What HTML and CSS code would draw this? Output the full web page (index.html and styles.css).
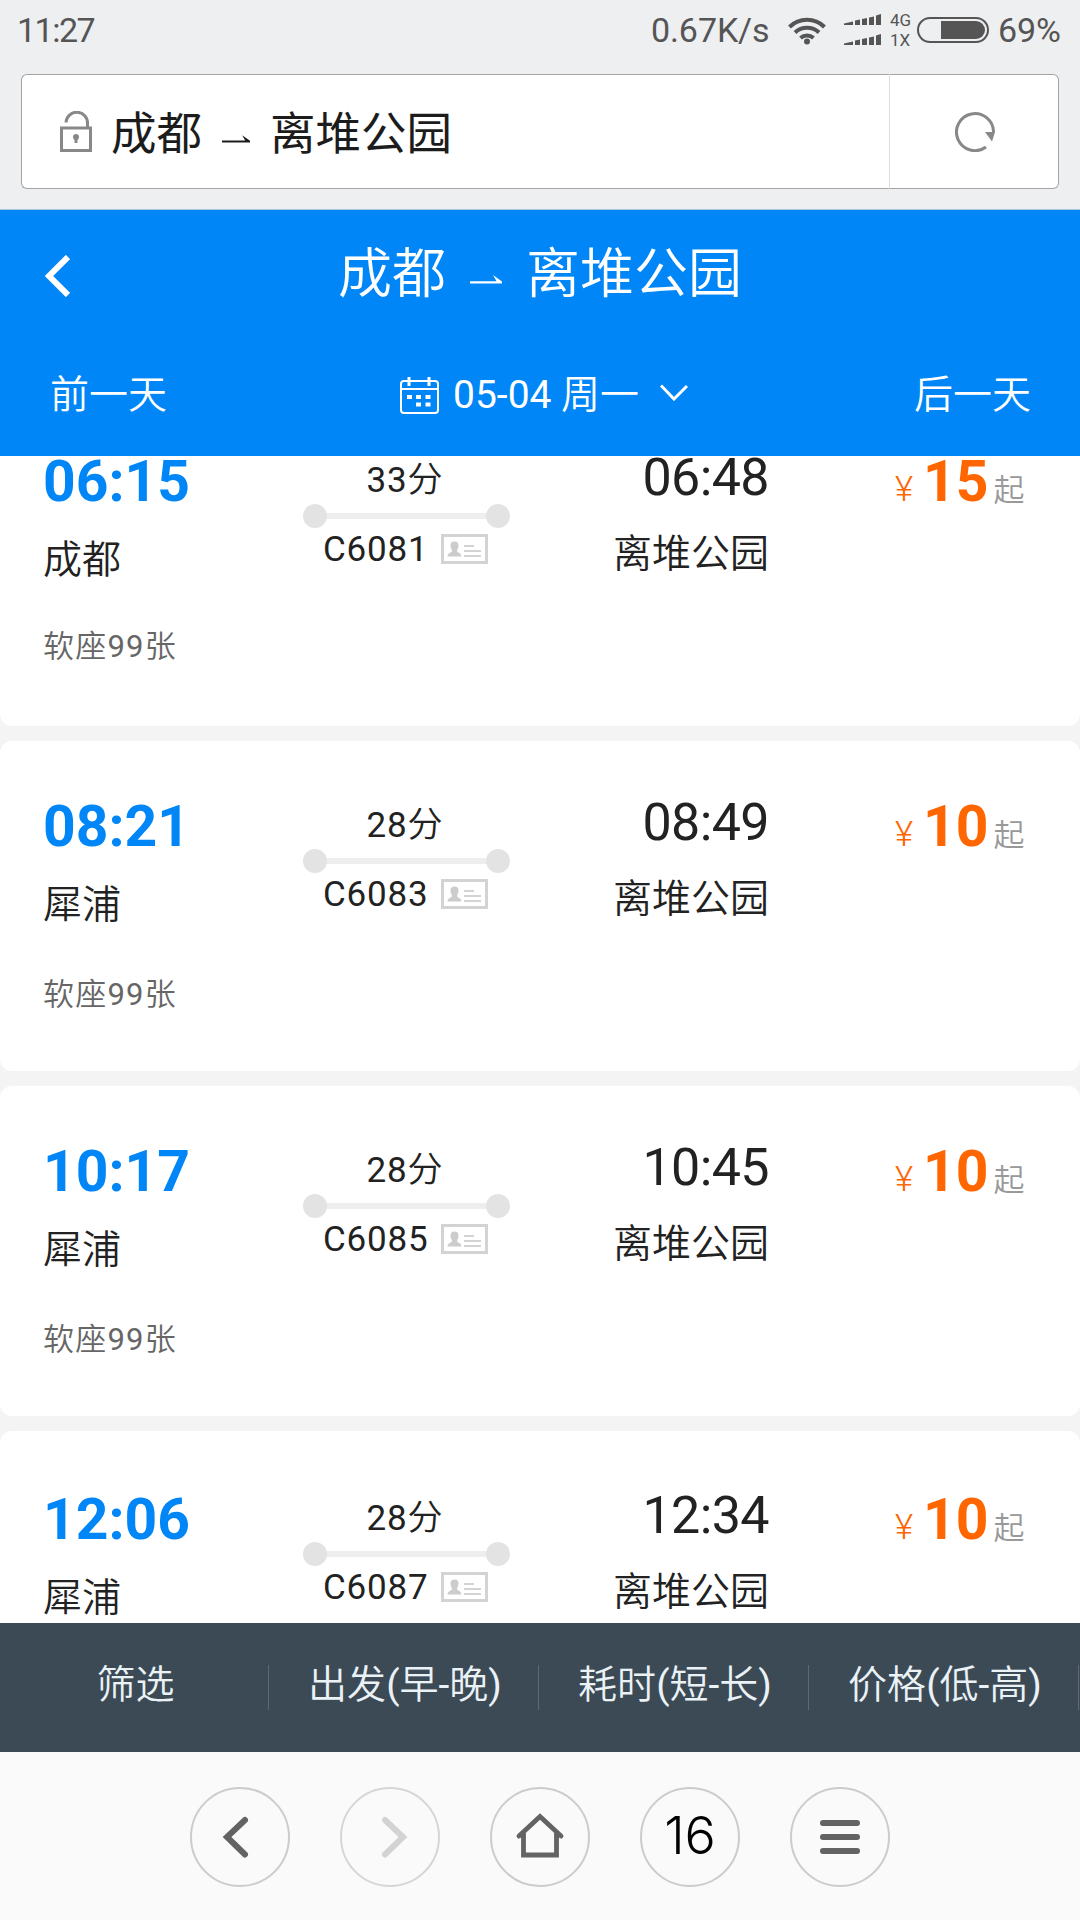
FILE: index.html
```
<!DOCTYPE html>
<html lang="zh-CN">

<head>
    <meta charset="UTF-8">
    <meta name="viewport" content="width=device-width, initial-scale=1.0">
    <title>成都 ⇀ 离堆公园</title>
    <link rel="stylesheet" href="styles.css">
</head>

<body>
    <!-- 状态栏 -->
    <div class="status-bar">
        <span class="clock">11:27</span>
        <span class="speed">0.67K/s</span>
        <svg class="wifi" viewBox="0 0 38 29">
            <path d="M1.500 11a25 25 0 0 1 35 0M7 16.500a17.500 17.500 0 0 1 24 0M12.500 22a9.500 9.500 0 0 1 13 0" />
            <circle cx="19" cy="25.500" r="3" />
        </svg>
        <svg class="signal" viewBox="0 0 38 32">
            <path d="M0 9.500L9 7.500V11H0zM11 6.500l5-1V11h-5zM18 5l5-1v7h-5zM25 3.500l5-1V11h-5zM32 1.500L37 0v11h-5z" />
            <path d="M0 29.500L9 27.500V31H0zM11 26.500l5-1V31h-5zM18 25l5-1v7h-5zM25 23.500l5-1V31h-5zM32 21.500L37 20v11h-5z" />
        </svg>
        <div class="net">
            <span>4G</span>
            <span>1X</span>
        </div>
        <div class="battery"><i></i></div>
        <span class="percent">69%</span>
    </div>

    <!-- 地址栏 -->
    <div class="address-bar">
        <div class="address">
            <svg class="lock" viewBox="0 0 32 41">
                <path d="M1.500 17h29v22.500h-29zM6 11.500a10.700 10.700 0 0 1 21.500 1V17" />
                <circle cx="16" cy="26" r="3" />
                <path d="M16 26v6" />
            </svg>
            <span>成都</span>
            <svg class="arrow" viewBox="0 0 32 10">
                <path d="M0 8.500H32V6.500L23 0 26.500 6.200H0z" />
            </svg>
            <span>离堆公园</span>
        </div>
        <div class="reload">
            <svg viewBox="0 0 40 41">
                <path d="M31 36A18.500 18.500 0 1 1 38.500 21.500" />
                <path class="tip" d="M30 21h10l-3 9.500z" />
            </svg>
        </div>
    </div>

    <!-- 头部 -->
    <div class="header">
        <div class="title-row">
            <svg class="back" viewBox="0 0 25 42">
                <path d="M23 2L4 21l19 19" />
            </svg>
            <div class="title">
                <span>成都</span>
                <svg class="arrow" viewBox="0 0 32 10">
                    <path d="M0 8.500H32V6.500L23 0 26.500 6.200H0z" />
                </svg>
                <span>离堆公园</span>
            </div>
        </div>
        <div class="date-row">
            <span>前一天</span>
            <div class="date">
                <svg class="calendar" viewBox="0 0 39 37">
                    <path d="M4 4h31a3 3 0 0 1 3 3v26a3 3 0 0 1-3 3H4a3 3 0 0 1-3-3V7a3 3 0 0 1 3-3zM1 12h37" />
                    <path class="thick" d="M9 0v9M29 0v9" />
                    <path class="dots" d="M7 18h5v4h-5zM16 18h5v4h-5zM25.500 18h5v4h-5zM16 25.500h5v4h-5zM25.500 25.500h5v4h-5z" />
                </svg>
                <span><em>05-04</em> 周一</span>
                <svg class="down" viewBox="0 0 28 17">
                    <path d="M1 1.500L14 15 27 2" />
                </svg>
            </div>
            <span>后一天</span>
        </div>
    </div>

    <!-- 车次列表 -->
    <div class="list"></div>

    <!-- 筛选 -->
    <div class="filter">
        <div>筛选</div>
        <div>出发<em>(</em>早<em>-</em>晚<em>)</em></div>
        <div>耗时<em>(</em>短<em>-</em>长<em>)</em></div>
        <div>价格<em>(</em>低<em>-</em>高<em>)</em></div>
    </div>

    <!-- 浏览器工具栏 -->
    <div class="toolbar">
        <div class="btn">
            <svg viewBox="0 0 100 100">
                <path d="M55 33L37 50l18 17.500" />
            </svg>
        </div>
        <div class="btn disabled">
            <svg viewBox="0 0 100 100">
                <path d="M45 33L63 50 45 67.500" />
            </svg>
        </div>
        <div class="btn">
            <svg class="home" viewBox="0 0 100 100">
                <path d="M29 49L50 29.500 71 49M33.500 46v22h33V46" />
            </svg>
        </div>
        <div class="btn num">16</div>
        <div class="btn">
            <svg viewBox="0 0 100 100">
                <path d="M33 36h34M33 50h34M33 64h34" />
            </svg>
        </div>
    </div>

    <script>
        // 车次数据
        var trains = [
            ['06:15', '成都', '33', 'C6081', '06:48', '15'],
            ['08:21', '犀浦', '28', 'C6083', '08:49', '10'],
            ['10:17', '犀浦', '28', 'C6085', '10:45', '10'],
            ['12:06', '犀浦', '28', 'C6087', '12:34', '10']
        ];
        var list = document.getElementsByClassName('list')[0];
        var html = '';
        for (var i = 0; i < trains.length; i++) {
            var t = trains[i];
            html += '<div class="card"><div class="info">' +
                '<div class="from"><b>' + t[0] + '</b><p>' + t[1] + '</p></div>' +
                '<div class="trip"><p><em>' + t[2] + '</em>分</p><div class="line"></div>' +
                '<div class="no"><em>' + t[3] + '</em>' +
                '<svg class="id-card" viewBox="0 0 47 30"><rect x="1.500" y="1.500" width="44" height="27"/>' +
                '<path class="man" d="M13.500 7.500a4 4 0 0 1 4 4c0 3-1.500 4-1.500 5.500 0 1.500 4.500 2 4.500 5.500h-14c0-3.500 4.500-4 4.500-5.500 0-1.500-1.500-2.500-1.500-5.500a4 4 0 0 1 4-4z"/>' +
                '<path class="rows" d="M23 12h10M23 17h17M23 22h17"/></svg></div></div>' +
                '<div class="to"><b>' + t[4] + '</b><p>离堆公园</p></div>' +
                '<div class="price"><i>¥</i><b>' + t[5] + '</b><span>起</span></div>' +
                '</div><div class="seat">软座<em>99</em>张</div></div>';
        }
        list.innerHTML = html;
        // 列表已滚动一段
        list.scrollTop = 60;
    </script>
</body>

</html>
```

FILE: styles.css
```
* {
    margin: 0;
    padding: 0;
    box-sizing: border-box;
}

body {
    width: 1080px;
    height: 1920px;
    overflow: hidden;
    display: flex;
    flex-direction: column;
    font-family: Roboto, "Noto Sans CJK SC", sans-serif;
    background: #f4f4f4;
    color: #222;
}

svg {
    display: block;
    flex: none;
    fill: none;
}

i,
em {
    font-style: normal;
}

/* 数字比汉字略粗 */
em {
    font-weight: 400;
}

/* 状态栏 */
.status-bar {
    flex: none;
    display: flex;
    align-items: center;
    height: 74px;
    padding: 0 0 14px 17px;
    background: #eeeff1;
    color: #555;
    font-size: 34px;
    white-space: nowrap;
}

.clock {
    width: 634px;
    letter-spacing: -1.5px;
}

.speed {
    width: 137px;
    letter-spacing: -.1px;
}

.wifi {
    width: 38px;
    height: 29px;
    stroke: #555;
    stroke-width: 4;
}

.wifi circle {
    fill: #555;
    stroke: none;
}

.signal {
    width: 38px;
    height: 32px;
    margin-left: 18px;
    fill: #555;
}

.net {
    width: 27px;
    margin-left: 8px;
    font-size: 17px;
    line-height: 20px;
}

.net span {
    display: block;
}

.battery {
    flex: none;
    width: 72px;
    height: 26px;
    padding: 2px 2px 2px 22px;
    border: 2px solid #555;
    border-radius: 13px;
}

.battery i {
    display: block;
    height: 18px;
    border-radius: 0 9px 9px 0;
    background: #555;
}

.percent {
    margin-left: 9px;
    letter-spacing: -.1px;
}

/* 地址栏 */
.address-bar {
    flex: none;
    display: flex;
    height: 136px;
    padding: 0 21px 20px;
    background: #eeeff1;
    border-bottom: 1px solid #a9c8dc;
}

.address {
    display: flex;
    align-items: center;
    width: 869px;
    border: 1px solid #a4a4a6;
    border-right-color: #ddd;
    border-radius: 6px 0 0 6px;
    background: #fff;
    padding-left: 38px;
    font-size: 45.5px;
    color: #1c1c1c;
}

.address span {
    padding-bottom: 4px;
}

.lock {
    width: 32px;
    height: 41px;
    margin-right: 19px;
    stroke: #888;
    stroke-width: 3;
}

.lock circle {
    fill: #888;
    stroke: none;
}

.address .arrow {
    width: 28px;
    height: 9px;
    margin: 15px 20px 0 20px;
    fill: #1c1c1c;
}

.reload {
    flex: 1;
    display: flex;
    align-items: center;
    justify-content: center;
    border: 1px solid #a4a4a6;
    border-left: none;
    border-radius: 0 6px 6px 0;
    background: #fff;
}

.reload svg {
    width: 40px;
    height: 41px;
    margin-left: 2px;
    stroke: #888;
    stroke-width: 3;
}

.reload .tip {
    fill: #888;
    stroke: none;
}

/* 头部 */
.header {
    flex: none;
    height: 246px;
    background: #0086f6;
    color: #fff;
}

.title-row {
    display: flex;
    align-items: center;
    height: 132px;
    padding-left: 45px;
}

.back {
    width: 25px;
    height: 42px;
    stroke: #fff;
    stroke-width: 6;
}

.title {
    display: flex;
    align-items: center;
    margin-left: 268px;
    font-size: 54px;
    font-weight: 350;
}

.title span {
    padding-bottom: 14px;
}

.title .arrow {
    width: 32px;
    height: 10px;
    margin: 7px 24px 0 24px;
    fill: #fff;
}

.date-row {
    display: flex;
    align-items: center;
    justify-content: space-between;
    height: 104px;
    padding: 0 49px 0 50px;
    font-size: 39px;
    font-weight: 350;
}

.date-row span {
    padding-bottom: 6px;
}

.date {
    display: flex;
    align-items: center;
    padding-left: 7px;
}

.calendar {
    width: 39px;
    height: 37px;
    margin: 2px 14px 0 0;
    stroke: #fff;
    stroke-width: 2;
}

.calendar .thick {
    stroke-width: 3;
}

.calendar .dots {
    fill: #fff;
    stroke: none;
}

.down {
    width: 28px;
    height: 17px;
    margin: 0 0 4px 21px;
    stroke: #fff;
    stroke-width: 3;
}

/* 车次列表 */
.list {
    flex: none;
    height: 1167px;
    overflow: hidden;
}

.card {
    height: 330px;
    margin-bottom: 15px;
    padding: 51px 44px 0 43px;
    border-radius: 12px;
    background: #fff;
}

.card:last-child {
    padding-top: 54px;
}

.info {
    display: flex;
    height: 180px;
}

.from {
    width: 260px;
}

.from b {
    display: block;
    font-size: 57px;
    line-height: 70px;
    color: #0086f6;
}

.from p,
.to p {
    font-size: 39px;
    line-height: 60px;
    font-weight: 350;
}

.from p {
    margin-top: 13px;
}

.trip {
    width: 207px;
    padding-top: 11px;
    font-size: 35px;
    font-weight: 350;
    letter-spacing: .8px;
}

.trip p {
    padding-right: 3px;
    line-height: 46px;
    text-align: center;
}

.line {
    display: flex;
    align-items: center;
    justify-content: space-between;
    height: 24px;
    background: linear-gradient(#eee, #eee) center / 180px 6px no-repeat;
}

.line::before,
.line::after {
    content: '';
    width: 24px;
    height: 24px;
    border-radius: 50%;
    background: #e3e3e3;
}

.no {
    display: flex;
    align-items: center;
    justify-content: space-between;
    height: 42px;
    padding: 0 22px 0 20px;
}

.id-card {
    width: 47px;
    height: 30px;
    stroke: #d3d3d3;
    stroke-width: 3;
}

.id-card .man {
    fill: #ccc;
    stroke: none;
}

.id-card .rows {
    stroke-width: 2;
}

.to {
    width: 259px;
    text-align: right;
}

.to b {
    display: block;
    font-size: 52px;
    line-height: 62px;
    font-weight: 400;
    letter-spacing: -.6px;
}

.to p {
    margin-top: 15px;
}

.price {
    display: flex;
    align-items: baseline;
    height: 70px;
    margin-left: 126px;
    line-height: 70px;
    color: #ff6600;
}

.price i {
    width: 28px;
    font-size: 35px;
    font-weight: 300;
}

.price b {
    font-size: 57px;
}

.price span {
    margin-left: 5px;
    font-size: 31px;
    font-weight: 350;
    color: #999;
}

.seat {
    font-size: 31px;
    line-height: 46px;
    color: #666;
    font-weight: 350;
    letter-spacing: 1.2px;
}

.card:first-child .seat {
    margin-top: -3px;
}

/* 筛选 */
.filter {
    flex: none;
    display: flex;
    align-items: center;
    height: 129px;
    background: #3c4a56;
    color: #eaf2f6;
    font-size: 39px;
    font-weight: 350;
}

.filter div {
    width: 270px;
    height: 45px;
    padding-left: 3px;
    line-height: 40px;
    text-align: center;
    border-right: 1px solid #5d6a75;
}

.filter div:first-child {
    width: 269px;
}

/* 浏览器工具栏 */
.toolbar {
    flex: 1;
    display: flex;
    align-items: center;
    justify-content: center;
    gap: 50px;
    padding-top: 2px;
    background: #fafafa;
}

.btn {
    width: 100px;
    height: 100px;
    border: 2px solid #ccc;
    border-radius: 50%;
}

.btn svg {
    margin: -2px;
    width: 100px;
    height: 100px;
    stroke: #636363;
    stroke-width: 6;
    stroke-linecap: round;
}

.btn .home {
    stroke-width: 4.8;
}

.disabled {
    border-color: #d6d6d6;
}

.disabled svg {
    stroke: #d3d3d3;
}

.num {
    font-family: Inter, sans-serif;
    font-size: 52px;
    font-weight: 300;
    line-height: 94px;
    text-align: center;
    color: #000;
}
```
